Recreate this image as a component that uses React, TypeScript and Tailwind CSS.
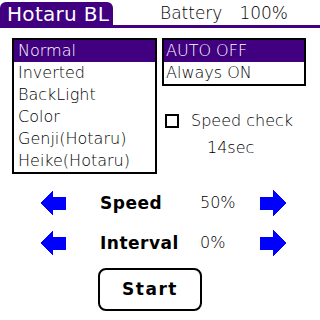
import React from "react";

const font = { fontFamily: '"DejaVu Sans", "Liberation Sans", sans-serif' };

function Arrow({ dir }: { dir: "left" | "right" }) {
  const pts =
    dir === "left"
      ? "0,13 13,0 13,7 26,7 26,20 13,20 13,26"
      : "26,13 13,0 13,7 0,7 0,20 13,20 13,26";
  return (
    <svg width="26" height="26" viewBox="0 0 26 26" shapeRendering="crispEdges" className="shrink-0">
      <polygon points={pts} fill="#0000ff" />
    </svg>
  );
}

function Row({ label, value }: { label: string; value: string }) {
  return (
    <div className="flex items-center h-[26px] pl-[40px]">
      <Arrow dir="left" />
      <div className="ml-[34px] w-[100px] text-[17px] font-bold tracking-[0.5px] leading-none text-black">{label}</div>
      <div className="w-[60px] text-[16px] font-light leading-none text-black">{value}</div>
      <Arrow dir="right" />
    </div>
  );
}

export default function App() {
  const modes = ["Normal", "Inverted", "BackLight", "Color", "Genji(Hotaru)", "Heike(Hotaru)"];
  const opts = ["AUTO OFF", "Always ON"];
  return (
    <div className="w-[320px] h-[320px] bg-white overflow-hidden text-black" style={font}>
      {/* Header */}
      <div className="flex h-[28px] border-b-[3px] border-[#400080]">
        <div className="w-[113px] mt-[2px] rounded-t-[6px] bg-[#400080] text-white text-[20px] leading-[22px] pl-[7px] pt-[1px] tracking-[0.3px]">
          Hotaru BL
        </div>
        <div className="ml-[47px] pt-[4px] text-[17px] leading-[18px] font-light">
          Battery<span className="ml-[17px]">100%</span>
        </div>
      </div>

      {/* Body */}
      <div className="flex mt-[10px]">
        <div className="ml-[12px] w-[145px] border-2 border-black">
          {modes.map((m, i) => (
            <div
              key={m}
              className={`h-[22px] pl-[4px] text-[16px] leading-[22px] font-light ${i === 0 ? "bg-[#400080] text-white" : ""}`}
            >
              {m}
            </div>
          ))}
        </div>
        <div className="ml-[5px] w-[144px] flex flex-col">
          <div className="border-2 border-black">
            {opts.map((o, i) => (
              <div
                key={o}
                className={`h-[22px] pl-[2px] text-[16px] leading-[22px] font-light ${i === 0 ? "bg-[#400080] text-white" : ""}`}
              >
                {o}
              </div>
            ))}
          </div>
          <div className="flex items-center h-[16px] mt-[27px]">
            <div className="ml-[3px] w-[14px] h-[14px] border-2 border-black shrink-0" />
            <div className="ml-[12px] text-[16px] leading-[16px] font-light">Speed check</div>
          </div>
          <div className="mt-[11px] pl-[45px] text-[16px] leading-[16px] font-light">14sec</div>
        </div>
      </div>

      <div className="mt-[16px] flex flex-col gap-[14px]">
        <Row label="Speed" value="50%" />
        <Row label="Interval" value="0%" />
      </div>

      <div className="mt-[12px] ml-[98px] w-[104px] h-[43px] border-2 border-black rounded-[8px] flex items-center justify-center text-[17px] font-bold tracking-[1.5px]">
        Start
      </div>
    </div>
  );
}
